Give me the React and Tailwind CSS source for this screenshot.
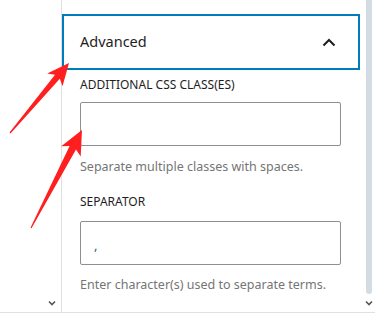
import React from "react";

function arrowPoints(tail, tip, headLen, headHalf, shaftHalf, tailHalf) {
  const dx = tip[0] - tail[0];
  const dy = tip[1] - tail[1];
  const L = Math.hypot(dx, dy);
  const u = [dx / L, dy / L];
  const n = [-u[1], u[0]];
  const B = [tip[0] - headLen * u[0], tip[1] - headLen * u[1]];
  const N = [tip[0] - (headLen - 4) * u[0], tip[1] - (headLen - 4) * u[1]];
  const p = (c, s) => [c[0] + s * n[0], c[1] + s * n[1]];
  const pts = [
    tip,
    p(B, headHalf),
    p(N, shaftHalf),
    p(tail, tailHalf),
    p(tail, -tailHalf),
    p(N, -shaftHalf),
    p(B, -headHalf),
  ];
  return pts.map((q) => q[0].toFixed(1) + "," + q[1].toFixed(1)).join(" ");
}

function ChevronDownSmall() {
  return (
    <svg width="8" height="6" viewBox="0 0 8 6">
      <path d="M1 1.5 L4 4.5 L7 1.5" fill="none" stroke="#555" strokeWidth="1.6" />
    </svg>
  );
}

export default function App() {
  return (
    <div
      className="relative w-[375px] h-[320px] bg-white overflow-hidden text-[#1e1e1e]"
      style={{ fontFamily: '"Noto Sans", "Open Sans", Arial, sans-serif' }}
    >
      <div className="flex h-[313px] border-b border-[#e0e0e0]">
        <div className="w-[62px] border-r border-[#e0e0e0] flex flex-col justify-end items-end pr-[5px] pb-[6px]">
          <ChevronDownSmall />
        </div>
        <div className="w-[298px] flex flex-col">
          <div className="h-[14px]" />
          <div className="h-[56px] border-2 border-[#007cba] flex items-center justify-between pl-[16px] pr-[22px]">
            <span className="text-[14.5px] font-normal">Advanced</span>
            <svg width="14" height="9" viewBox="0 0 14 9">
              <path d="M1.5 7.5 L7 2 L12.5 7.5" fill="none" stroke="#1e1e1e" strokeWidth="2" />
            </svg>
          </div>
          <div className="pl-[18px] pr-[18px] pt-[7px]">
            <div className="text-[12px] font-normal uppercase leading-[16px]">Additional CSS Class(es)</div>
            <div className="mt-[9px] h-[44px] w-[261px] border border-[#8c8f94] rounded-[2px]" />
            <div className="mt-[12px] text-[12.5px] text-[#757575] leading-[18px]">Separate multiple classes with spaces.</div>
            <div className="mt-[18px] text-[12px] font-normal uppercase leading-[16px]">Separator</div>
            <div className="mt-[11px] h-[44px] w-[261px] border border-[#8c8f94] rounded-[2px] flex items-center pl-[13px] pt-[6px] text-[13px]">
              <span className="text-[#2a5f8f]">,</span>
            </div>
            <div className="mt-[11px] text-[12.5px] text-[#757575] leading-[18px]">Enter character(s) used to separate terms.</div>
          </div>
        </div>
        <div className="flex-1 flex flex-col items-center pt-0 pb-[6px] pl-[3px]">
          <div className="w-[6px] h-[294px] bg-[#d3dbe3] rounded-b-[3px]" />
          <div className="flex-1" />
          <ChevronDownSmall />
        </div>
      </div>
      <svg className="absolute left-0 top-0 pointer-events-none" width="375" height="320">
        <polygon points={arrowPoints([10, 133], [69, 63], 22, 10, 3.2, 0.6)} fill="#ff1f1f" />
        <polygon points={arrowPoints([31, 228], [82, 130], 24, 11, 3.6, 0.6)} fill="#ff1f1f" />
      </svg>
    </div>
  );
}
